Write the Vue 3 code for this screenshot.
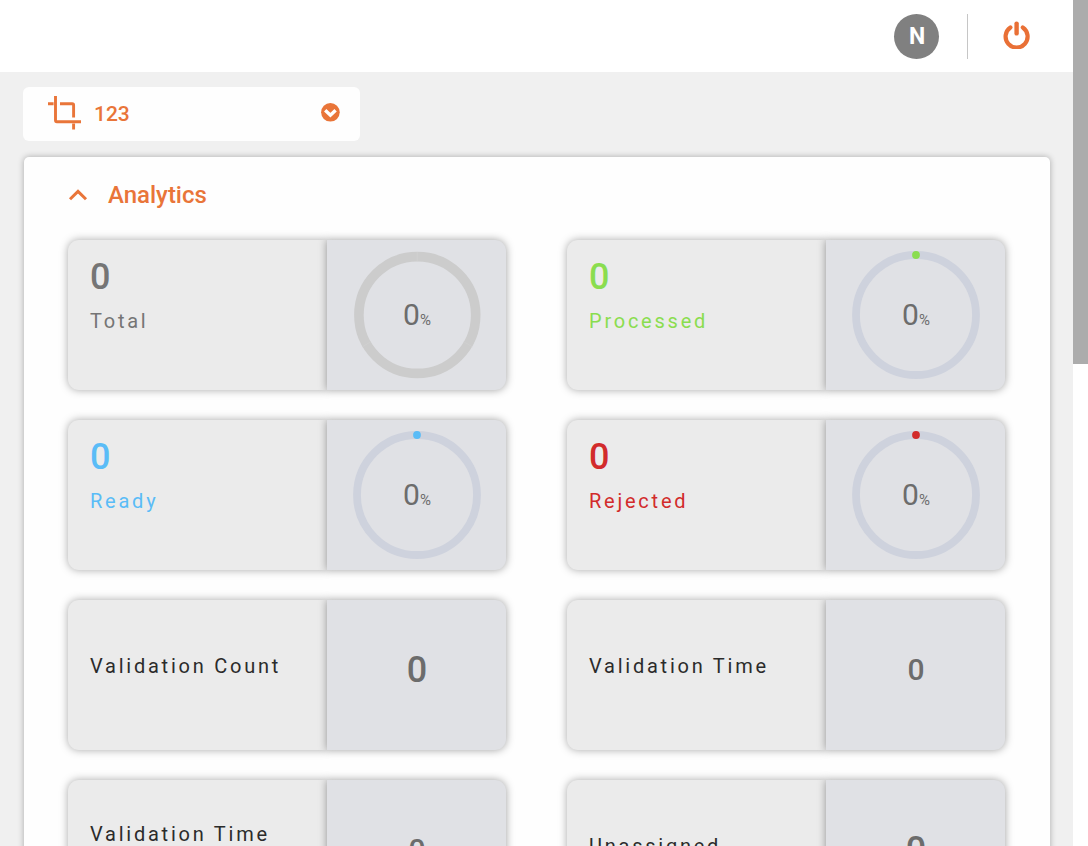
<script setup>
const gauges = [
  { name: 'Total', color: '#757575', total: true },
  { name: 'Processed', color: '#8add4f' },
  { name: 'Ready', color: '#5abcf7' },
  { name: 'Rejected', color: '#d22b2b' },
]
const metrics = [
  { name: 'Validation Count', large: true },
  { name: 'Validation Time', large: false },
  { name: 'Validation Time', large: false, raised: true },
  { name: 'Unassigned', large: true },
]
</script>

<template>
  <div class="page">
    <div class="main">
      <header class="topbar">
        <div class="avatar">N</div>
        <div class="divider"></div>
        <svg class="power" width="28" height="28" viewBox="0 0 28 28" fill="none" stroke="#e97036" stroke-linecap="round">
          <path d="M7.4 6.4A11 11 0 1 0 19.8 6.4" stroke-width="4.2" />
          <path d="M13.6 2.6V12.4" stroke-width="4.4" />
        </svg>
      </header>

      <div class="selector">
        <svg class="crop" width="34" height="34" viewBox="0 0 34 34" fill="none" stroke="#e97539" stroke-width="2.9">
          <path d="M7.5 0V24.3Q7.5 25.7 8.9 25.7H33" />
          <path d="M0 7.8H5.6M12 7.8H24.2Q25.6 7.8 25.6 9.2V21.4M25.6 27.4V33.4" />
        </svg>
        <span class="project">123</span>
        <svg class="down" width="20" height="20" viewBox="0 0 20 20">
          <circle cx="10.4" cy="10.3" r="9.3" fill="#e97539" />
          <path d="M5.2 8.2L10.4 13.2L15.6 8.2" fill="none" stroke="#fff" stroke-width="3.4" />
        </svg>
      </div>

      <section class="panel">
        <div class="heading">
          <svg width="20" height="14" viewBox="0 0 20 14" fill="none" stroke="#e97539" stroke-width="3">
            <path d="M2 11.2L10 3.4L18 11.2" />
          </svg>
          <span>Analytics</span>
        </div>
        <div class="grid">
          <div v-for="g in gauges" :key="g.name" class="card">
            <div class="info" :style="{ color: g.color }">
              <div class="count">0</div>
              <div class="label">{{ g.name }}</div>
            </div>
            <div class="side">
              <svg class="ring" width="130" height="130" viewBox="0 0 130 130" fill="none">
                <template v-if="g.total">
                  <circle cx="65.3" cy="65" r="58.4" stroke="#cccccc" stroke-width="9.6" />
                  <path d="M65.3 2V11.2M120.2 96.7L111.9 91.9M10.4 96.7L18.7 91.9" stroke="#d0d0d0" stroke-width="1" />
                </template>
                <template v-else>
                  <circle cx="65" cy="65" r="60" stroke="#ced2dd" stroke-width="7.8" />
                  <circle cx="65" cy="5" r="3.9" :fill="g.color" />
                </template>
              </svg>
              <div class="percent"><span>0</span><small>%</small></div>
            </div>
          </div>
          <div v-for="(m, i) in metrics" :key="i" class="card">
            <div class="info metric" :class="{ raised: m.raised }">
              <div class="label">{{ m.name }}</div>
            </div>
            <div class="side">
              <div class="value" :class="{ large: m.large }">0</div>
            </div>
          </div>
        </div>
      </section>
    </div>
    <div class="scrollbar"><div class="thumb"></div></div>
  </div>
</template>

<style>
html, body { margin: 0; height: 100%; overflow: hidden; }
</style>

<style scoped>
.page { display: flex; width: 1088px; height: 846px; overflow: hidden; background: #f0f0f0; font-family: Roboto, "Liberation Sans", sans-serif; }
.main { width: 1073px; flex: none; overflow: hidden; }
.scrollbar { width: 15px; background: #fff; }
.thumb { height: 364px; background: #acacac; }
.topbar { height: 72px; box-sizing: border-box; background: #fff; display: flex; align-items: center; justify-content: flex-end; padding: 1px 42px 0 0; }
.avatar { width: 45px; height: 45px; box-sizing: border-box; padding-left: 1px; border-radius: 50%; background: #808080; color: #fff; font-size: 23px; font-weight: 700; line-height: 46px; text-align: center; }
.divider { width: 1px; height: 45px; background: #c6c6c6; margin: 0 35px 0 28px; }
.power { margin-top: -3px; }
.selector { display: flex; align-items: center; width: 337px; height: 54px; box-sizing: border-box; margin: 15px 0 0 23px; padding: 0 20px 0 25px; border-radius: 6px; background: #fefefe; }
.crop { display: block; margin-top: -3px; }
.project { flex: 1; margin-left: 12px; color: #e97539; font-size: 21px; font-weight: 500; line-height: 54px; }
.down { margin-top: -4px; }
.panel { width: 1026px; height: 800px; box-sizing: border-box; margin: 16px 0 0 24px; padding: 0 44px; border-radius: 5px; background: #fefefe; box-shadow: 0 0 6px rgba(0, 0, 0, .3); }
.heading { display: flex; align-items: center; height: 83px; box-sizing: border-box; padding-bottom: 7px; color: #e97539; font-size: 24px; font-weight: 500; }
.heading span { margin-left: 20px; }
.grid { display: grid; grid-template-columns: 438px 438px; column-gap: 61px; row-gap: 30px; }
.card { display: flex; height: 150px; }
.info { width: 259px; box-sizing: border-box; padding: 16px 0 0 22px; border-radius: 11px 0 0 11px; background: #ebebeb; box-shadow: 0 0 8px rgba(0,0,0,.34); }
.count { font-size: 36px; font-weight: 500; line-height: 42px; }
.label { margin-top: 11px; font-size: 20px; line-height: 24px; letter-spacing: 2.76px; white-space: nowrap; }
.metric { padding-top: 43px; color: #2b2b2b; }
.raised { padding-top: 31px; }
.side { width: 179px; display: grid; place-items: center; border-radius: 0 11px 11px 0; background: #e0e1e5; box-shadow: 0 0 9px rgba(0,0,0,.38); color: #6c6c6c; }
.side > * { grid-area: 1 / 1; }
.ring { display: block; margin-left: 1px; }
.percent { line-height: 36px; padding: 4px 0 0 1px; white-space: nowrap; }
.percent span { font-size: 30px; }
.percent small { font-size: 15px; }
.value { font-size: 30px; font-weight: 500; line-height: 36px; padding: 0 0 10px 1px; }
.value.large { font-size: 36px; }
</style>
